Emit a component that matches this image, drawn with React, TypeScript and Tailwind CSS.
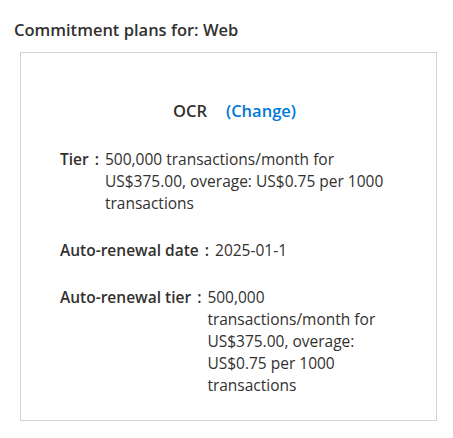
export default function App() {
  const rows = [
    {
      label: "Tier",
      value:
        "500,000 transactions/month for US$375.00, overage: US$0.75 per 1000 transactions",
    },
    { label: "Auto-renewal date", value: "2025-01-1" },
    {
      label: "Auto-renewal tier",
      value:
        "500,000 transactions/month for US$375.00, overage: US$0.75 per 1000 transactions",
    },
  ];

  return (
    <main
      className="w-[453px] h-[438px] bg-white text-[#323130] pt-[19px] pl-[14px]"
      style={{ fontFamily: '"Open Sans", "Noto Sans", sans-serif' }}>
      <h2 className="text-[16.5px] font-semibold leading-[22px]">
        Commitment plans for: Web
      </h2>

      <div className="mt-[11px] ml-[6px] w-[417px] border border-[#d2d2d2] px-[39px] pt-[47px] pb-[24px]">
        <div className="flex justify-center items-center gap-[19px] text-[16.5px] font-semibold leading-[22px] pl-[12px]">
          <span>OCR</span>
          <a href="#" className="text-[#0078d4]">
            (Change)
          </a>
        </div>

        <div className="mt-[26px] flex flex-col gap-[25px]">
          {rows.map((r) => (
            <div key={r.label} className="flex text-[15.5px] leading-[22px]">
              <span className="font-semibold whitespace-nowrap">{r.label}</span>
              <span className="mx-[6px] font-semibold">:</span>
              <span className="flex-1">{r.value}</span>
            </div>
          ))}
        </div>
      </div>
    </main>
  );
}
